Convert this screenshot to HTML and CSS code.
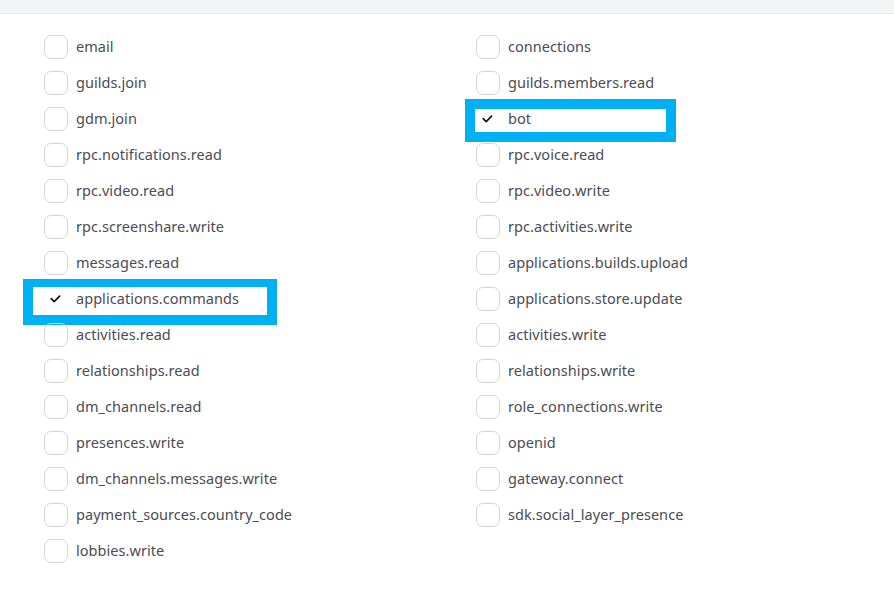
FILE: index.html
```html
<!DOCTYPE html>
<html>
<head>
<meta charset="utf-8">
<link rel="stylesheet" href="styles.css">
</head>
<body>
<div class="topbar"></div>
<div class="scopes">
  <div class="col">
    <div class="row"><span class="box"></span><span class="label">email</span></div>
    <div class="row"><span class="box"></span><span class="label">guilds.join</span></div>
    <div class="row"><span class="box"></span><span class="label">gdm.join</span></div>
    <div class="row"><span class="box"></span><span class="label">rpc.notifications.read</span></div>
    <div class="row"><span class="box"></span><span class="label">rpc.video.read</span></div>
    <div class="row"><span class="box"></span><span class="label">rpc.screenshare.write</span></div>
    <div class="row"><span class="box"></span><span class="label">messages.read</span></div>
    <div class="row checked hl-left"><span class="box"><svg viewBox="0 0 24 24" width="24" height="24"><path d="M7.2 11.6 L10.2 14.6 L15.6 9.2" fill="none" stroke="#111" stroke-width="1.7" stroke-linecap="round" stroke-linejoin="round"/></svg></span><span class="label">applications.commands</span></div>
    <div class="row"><span class="box"></span><span class="label">activities.read</span></div>
    <div class="row"><span class="box"></span><span class="label">relationships.read</span></div>
    <div class="row"><span class="box"></span><span class="label">dm_channels.read</span></div>
    <div class="row"><span class="box"></span><span class="label">presences.write</span></div>
    <div class="row"><span class="box"></span><span class="label">dm_channels.messages.write</span></div>
    <div class="row"><span class="box"></span><span class="label">payment_sources.country_code</span></div>
    <div class="row"><span class="box"></span><span class="label">lobbies.write</span></div>
  </div>
  <div class="col">
    <div class="row"><span class="box"></span><span class="label">connections</span></div>
    <div class="row"><span class="box"></span><span class="label">guilds.members.read</span></div>
    <div class="row checked hl-right"><span class="box"><svg viewBox="0 0 24 24" width="24" height="24"><path d="M7.2 11.6 L10.2 14.6 L15.6 9.2" fill="none" stroke="#111" stroke-width="1.7" stroke-linecap="round" stroke-linejoin="round"/></svg></span><span class="label">bot</span></div>
    <div class="row"><span class="box"></span><span class="label">rpc.voice.read</span></div>
    <div class="row"><span class="box"></span><span class="label">rpc.video.write</span></div>
    <div class="row"><span class="box"></span><span class="label">rpc.activities.write</span></div>
    <div class="row"><span class="box"></span><span class="label">applications.builds.upload</span></div>
    <div class="row"><span class="box"></span><span class="label">applications.store.update</span></div>
    <div class="row"><span class="box"></span><span class="label">activities.write</span></div>
    <div class="row"><span class="box"></span><span class="label">relationships.write</span></div>
    <div class="row"><span class="box"></span><span class="label">role_connections.write</span></div>
    <div class="row"><span class="box"></span><span class="label">openid</span></div>
    <div class="row"><span class="box"></span><span class="label">gateway.connect</span></div>
    <div class="row"><span class="box"></span><span class="label">sdk.social_layer_presence</span></div>
  </div>
</div>
</body>
</html>
```
FILE: styles.css
```css
html, body {
  margin: 0;
  padding: 0;
  background: #ffffff;
}
body {
  width: 894px;
  height: 606px;
  overflow: hidden;
  font-family: "Noto Sans", "Open Sans", sans-serif;
  color: #4e5058;
}
.topbar {
  height: 14px;
  background: #f2f3f5;
  border-bottom: 1px solid #ebedef;
  box-sizing: border-box;
}
.scopes {
  display: flex;
  padding: 21px 0 0 44px;
}
.col {
  flex: none;
  width: 432px;
  display: flex;
  flex-direction: column;
  gap: 12px;
}
.row {
  position: relative;
  display: flex;
  align-items: center;
  height: 24px;
}
.box {
  position: relative;
  z-index: 1;
  width: 24px;
  height: 24px;
  box-sizing: border-box;
  border: 1px solid #d4d5d9;
  border-radius: 7px;
  flex: none;
}
.box svg {
  display: block;
  margin: -1px;
}
.checked .box {
  border-color: transparent;
}
.label {
  position: relative;
  z-index: 1;
  margin-left: 8px;
  font-size: 14.5px;
  line-height: 20px;
  padding-bottom: 3px;
  letter-spacing: 0.05px;
  color: #4a4c54;
}
.hl-left::before,
.hl-right::before {
  content: "";
  position: absolute;
  box-sizing: border-box;
  background: #ffffff;
  border: 10px solid #00b0f4;
  z-index: 0;
}
.hl-left::before {
  left: -21px;
  top: -8px;
  width: 254px;
  height: 46px;
  border-width: 8px 10px 10px 10px;
}
.hl-right::before {
  left: -11px;
  top: -8px;
  width: 211px;
  height: 43px;
  border-width: 10px 10px 10px 10px;
}
```
